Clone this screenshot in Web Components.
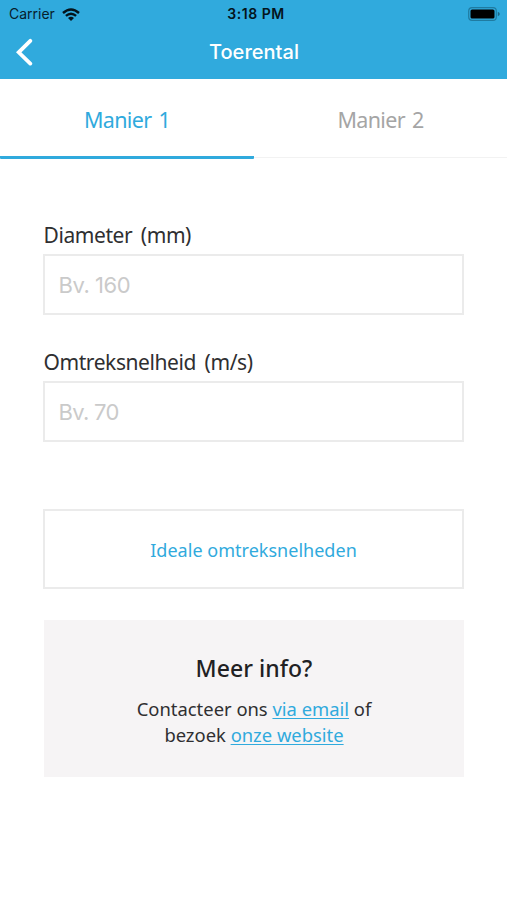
<!DOCTYPE html>
<html lang="nl">
<head>
<meta charset="utf-8">
<title>Toerental</title>
<style>
body{margin:0;background:#fff}
</style>
</head>
<body>
<app-screen>
  <app-header slot="header">Toerental</app-header>
  <tab-bar slot="tabs">
    <tab-item active>Manier 1</tab-item>
    <tab-item>Manier 2</tab-item>
  </tab-bar>
  <form-field label="Diameter (mm)" placeholder="Bv. 160"></form-field>
  <form-field label="Omtreksnelheid (m/s)" placeholder="Bv. 70" style="--ls:-.7px"></form-field>
  <outline-button>Ideale omtreksnelheden</outline-button>
  <info-panel heading="Meer info?">Contacteer ons <text-link>via email</text-link> of<br>bezoek <text-link>onze website</text-link></info-panel>
</app-screen>
<script>
function define(name, html, setup) {
  const template = document.createElement('template');
  template.innerHTML = html;
  customElements.define(name, class extends HTMLElement {
    connectedCallback() {
      if (this.shadowRoot) return;
      const root = this.attachShadow({mode: 'open'});
      root.append(template.content.cloneNode(true));
      if (setup) setup(this, root);
    }
  });
}

define('app-screen', `<style>
:host{display:flex;flex-direction:column;width:507px;height:900px;overflow:hidden;background:#fff;color:#2f2f31;font-family:"Noto Sans","Open Sans",sans-serif}
main{display:flex;flex-direction:column;padding:61px 43px 0 43px}
</style><slot name="header"></slot><slot name="tabs"></slot><main><slot></slot></main>`);

define('status-bar', `<style>
:host{display:grid;grid-template-columns:1fr auto 1fr;align-items:center;height:28px;padding:0 7px 0 9px;color:#07202c;font:14px/28px Inter,sans-serif}
.left{display:flex;align-items:center;gap:7px}
.time{font-weight:600;letter-spacing:.55px;color:#04141c;padding-left:3px}
.battery{justify-self:end}
svg{display:block}
</style>
<span class="left"><span>Carrier</span><svg width="18" height="13" viewBox="0 0 18 13"><g fill="none" stroke="#04141c" stroke-width="2.4"><path d="M1 5Q9-2.2 17 5"/><path d="M3.9 7.9Q9 3.5 14.1 7.9"/></g><path d="M6 10Q9 7.5 12 10L9 13Z" fill="#04141c"/></svg></span>
<span class="time">3:18 PM</span>
<svg class="battery" width="32" height="14" viewBox="0 0 32 14"><rect x=".7" y=".7" width="27.6" height="12.6" rx="3.4" fill="none" stroke="#1f7ba1" stroke-width="1.2"/><rect x="2.5" y="2.5" width="24" height="9" rx="1.6" fill="#000"/><path d="M29.8 4.8Q31.8 5.5 31.8 7T29.8 9.2Z" fill="#1a6788"/></svg>`);

define('app-header', `<style>
:host{display:block;height:79px;background:#30aadd;color:#fff}
nav{display:grid;grid-template-columns:40px 1fr 40px;align-items:center;height:48px;padding:0 0 3px 0}
svg{display:block;margin-left:16px}
h1{margin:0;padding-left:1px;text-align:center;font:550 20px/48px Inter,sans-serif;letter-spacing:.03px}
</style><status-bar></status-bar><nav><svg width="18" height="28" viewBox="0 0 18 28"><path d="M14.3 2.8L2.7 14.3L14.3 25.6" fill="none" stroke="#fff" stroke-width="3.8" stroke-linecap="round"/></svg><h1><slot></slot></h1></nav>`);

define('tab-bar', `<style>
:host{display:grid;grid-template-columns:254px 253px;height:79px;box-shadow:inset 0 -1px #f2f2f2}
</style><slot></slot>`);

define('tab-item', `<style>
:host{display:block;box-sizing:border-box;height:80px;text-align:center;color:#a5a5a5;font-size:21.5px;line-height:82px;letter-spacing:-.65px;word-spacing:2px}
:host([active]){color:#30aadd;border-bottom:3px solid #30aadd;border-radius:0 0 1px 1px}
</style><slot></slot>`);

define('form-field', `<style>
:host{display:block;height:127px}
label{display:block;height:34.5px;padding-left:.5px;font-size:21px;line-height:32px;letter-spacing:-.42px;word-spacing:3.5px}
:host{--w:421px}
.box{box-sizing:border-box;width:var(--w);height:61px;border:2px solid #ebebeb;padding-left:13.5px;font:22px/58px Inter,sans-serif;letter-spacing:var(--ls,-.45px);color:#cacaca}
</style><label></label><div class="box"></div>`, (host, root) => {
  root.querySelector('label').textContent = host.getAttribute('label');
  root.querySelector('.box').textContent = host.getAttribute('placeholder');
});

define('outline-button', `<style>
:host{display:block;box-sizing:border-box;width:421px;height:80px;margin-top:36px;border:2px solid #ebebeb;text-align:center;color:#30aadd;font-size:18px;line-height:78px;letter-spacing:.02px}
</style><slot></slot>`);

define('info-panel', `<style>
:host{display:block;box-sizing:border-box;width:420px;height:157px;margin:31px 0 0 1px;padding-top:32px;background:#f6f4f5;text-align:center;font-size:18.4px;line-height:26px}
h2{margin:0 0 12px;font-size:23px;line-height:32px;font-weight:550;color:#212123;letter-spacing:.05px}
</style><h2></h2><slot></slot>`, (host, root) => {
  root.querySelector('h2').textContent = host.getAttribute('heading');
});

define('text-link', `<style>
:host{display:inline;color:#30aadd;text-decoration:underline;text-decoration-thickness:1px;text-underline-offset:2px;text-decoration-skip-ink:none}
</style><slot></slot>`);
</script>
</body>
</html>
